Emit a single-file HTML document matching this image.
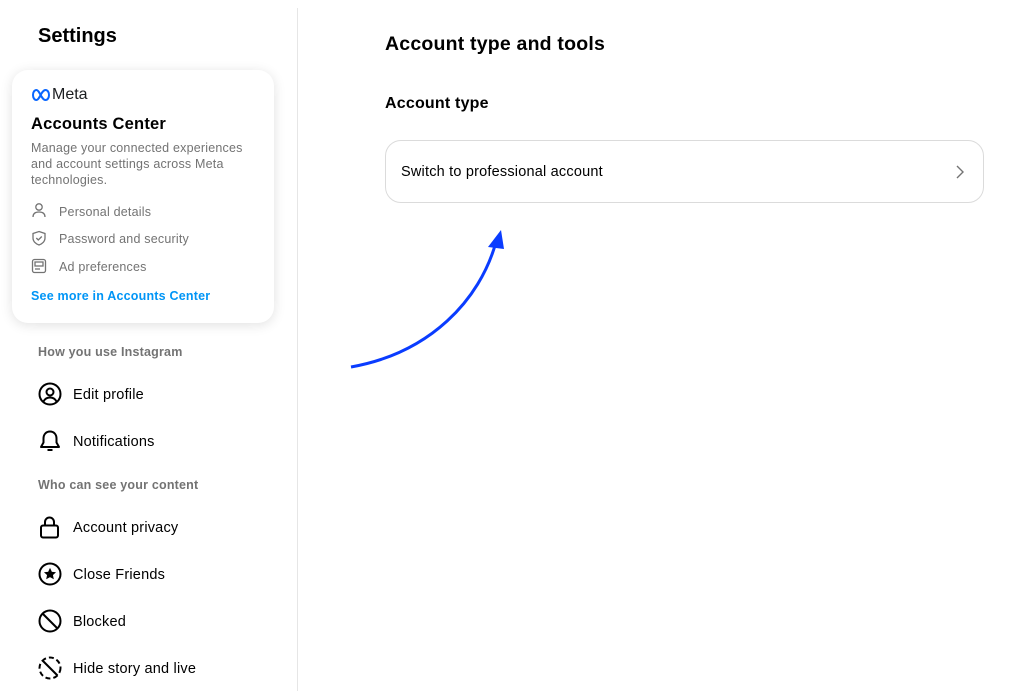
<!DOCTYPE html>
<html><head><meta charset="utf-8"><style>
*{margin:0;padding:0;box-sizing:border-box}
body{width:1024px;height:691px;background:#fff;font-family:"Liberation Sans",sans-serif;color:#000;position:relative;overflow:hidden}
.a{position:absolute;white-space:nowrap}
.side{position:absolute;left:297px;top:8px;width:1px;height:683px;background:#e6e6e6}
.card{position:absolute;left:12px;top:70px;width:262px;height:253px;border-radius:16px;background:#fff;box-shadow:0 2px 12px rgba(0,0,0,.12)}
.g{color:#737373;font-size:12.5px;letter-spacing:.2px}
.it{font-size:14.5px;color:#000;letter-spacing:.2px}
svg{position:absolute}
</style></head><body>
<div class="side"></div>
<div class="a" style="left:38px;top:25px;font-size:20px;font-weight:bold">Settings</div>
<div class="card"></div>
<svg style="left:31px;top:89px" width="20" height="12" viewBox="0 0 20 12"><path d="M2 6c0-3 1.5-5 3.5-5 3 0 5 10 9 10 2 0 3.5-2 3.5-5S16.5 1 14.5 1c-4 0-6 10-9 10C3.5 11 2 9 2 6z" fill="none" stroke="#0866ff" stroke-width="2"/></svg>
<div class="a" style="left:52px;top:86px;font-size:16px;color:#1c1e21">Meta</div>
<div class="a" style="left:31px;top:115px;font-size:16.5px;font-weight:bold;letter-spacing:.2px">Accounts Center</div>
<div class="a g" style="left:31px;top:140px;line-height:16px;white-space:normal;width:222px">Manage your connected experiences and account settings across Meta technologies.</div>
<svg style="left:31px;top:202px" width="16" height="16" viewBox="0 0 16 16" fill="none" stroke="#737373" stroke-width="1.3"><circle cx="8" cy="5" r="3.2"/><path d="M2 15c0-3.5 2.5-5 6-5s6 1.5 6 5"/></svg>
<div class="a g" style="left:59px;top:205px">Personal details</div>
<svg style="left:31px;top:230px" width="16" height="16" viewBox="0 0 16 16" fill="none" stroke="#737373" stroke-width="1.3"><path d="M8 1.5l6 2v4.5c0 3.5-3 6-6 7-3-1-6-3.5-6-7V3.5z"/><path d="M5.3 8l2 2 3.5-3.5"/></svg>
<div class="a g" style="left:59px;top:232px">Password and security</div>
<svg style="left:31px;top:258px" width="16" height="16" viewBox="0 0 16 16" fill="none" stroke="#737373" stroke-width="1.3"><rect x="1.5" y="1.5" width="13" height="13" rx="2"/><rect x="4" y="4" width="8" height="4"/><path d="M4 11h5"/></svg>
<div class="a g" style="left:59px;top:260px">Ad preferences</div>
<div class="a" style="left:31px;top:289px;font-size:12.5px;font-weight:bold;color:#0095f6;letter-spacing:.2px">See more in Accounts Center</div>
<div class="a" style="left:38px;top:345px;font-size:12.5px;font-weight:bold;color:#737373;letter-spacing:.2px">How you use Instagram</div>
<svg style="left:38px;top:382px" width="24" height="24" viewBox="0 0 24 24" fill="none" stroke="#000" stroke-width="2"><circle cx="12" cy="12" r="10.5"/><circle cx="12" cy="10" r="3.5"/><path d="M5.5 19.5c1.5-3 4-4 6.5-4s5 1 6.5 4"/></svg>
<div class="a it" style="left:73px;top:387px">Edit profile</div>
<svg style="left:38px;top:429px" width="24" height="24" viewBox="0 0 24 24" fill="none" stroke="#000" stroke-width="2"><path d="M12 2.5c-4 0-6.5 3-6.5 7v4L3 18h18l-2.5-4.5v-4c0-4-2.5-7-6.5-7z" stroke-linejoin="round"/><path d="M9.5 21h5"/></svg>
<div class="a it" style="left:73px;top:434px">Notifications</div>
<div class="a" style="left:38px;top:478px;font-size:12.5px;font-weight:bold;color:#737373;letter-spacing:.2px">Who can see your content</div>
<svg style="left:38px;top:515px" width="24" height="24" viewBox="0 0 24 24" fill="none" stroke="#000" stroke-width="2"><rect x="3" y="10.5" width="17" height="12" rx="2"/><path d="M7 10.5V7a4.5 4.5 0 0 1 9 0v3.5"/></svg>
<div class="a it" style="left:73px;top:520px">Account privacy</div>
<svg style="left:38px;top:562px" width="24" height="24" viewBox="0 0 24 24" fill="none" stroke="#000" stroke-width="2"><circle cx="12" cy="12" r="10.5"/><path d="M12 7l1.5 3.2 3.4.4-2.5 2.3.7 3.4-3.1-1.7-3.1 1.7.7-3.4-2.5-2.3 3.4-.4z" fill="#000" stroke-width="1"/></svg>
<div class="a it" style="left:73px;top:567px">Close Friends</div>
<svg style="left:38px;top:609px" width="24" height="24" viewBox="0 0 24 24" fill="none" stroke="#000" stroke-width="2"><circle cx="12" cy="12" r="10.5"/><path d="M4.5 4.5l15 15"/></svg>
<div class="a it" style="left:73px;top:614px">Blocked</div>
<svg style="left:38px;top:656px" width="24" height="24" viewBox="0 0 24 24" fill="none" stroke="#000" stroke-width="2"><circle cx="12" cy="12" r="10.5" stroke-dasharray="5 3"/><path d="M4.5 4.5l15 15"/></svg>
<div class="a it" style="left:73px;top:661px">Hide story and live</div>

<div class="a" style="left:385px;top:33px;font-size:19.5px;font-weight:bold;letter-spacing:.2px">Account type and tools</div>
<div class="a" style="left:385px;top:95px;font-size:16px;font-weight:bold;letter-spacing:.2px">Account type</div>
<div style="position:absolute;left:385px;top:140px;width:599px;height:63px;border:1px solid #dbdbdb;border-radius:16px"></div>
<div class="a" style="left:401px;top:164px;font-size:14.5px;letter-spacing:.2px">Switch to professional account</div>
<svg style="left:954px;top:164px" width="12" height="16" viewBox="0 0 12 16"><path d="M3 2l6 6-6 6" fill="none" stroke="#737373" stroke-width="1.4"/></svg>
<svg style="left:340px;top:220px" width="180" height="160" viewBox="0 0 180 160"><path d="M11 147C90 133 140 80 156 22" fill="none" stroke="#0a3cff" stroke-width="3"/><path d="M161 10l-13 17 16 2z" fill="#0a3cff"/></svg>
</body></html>
